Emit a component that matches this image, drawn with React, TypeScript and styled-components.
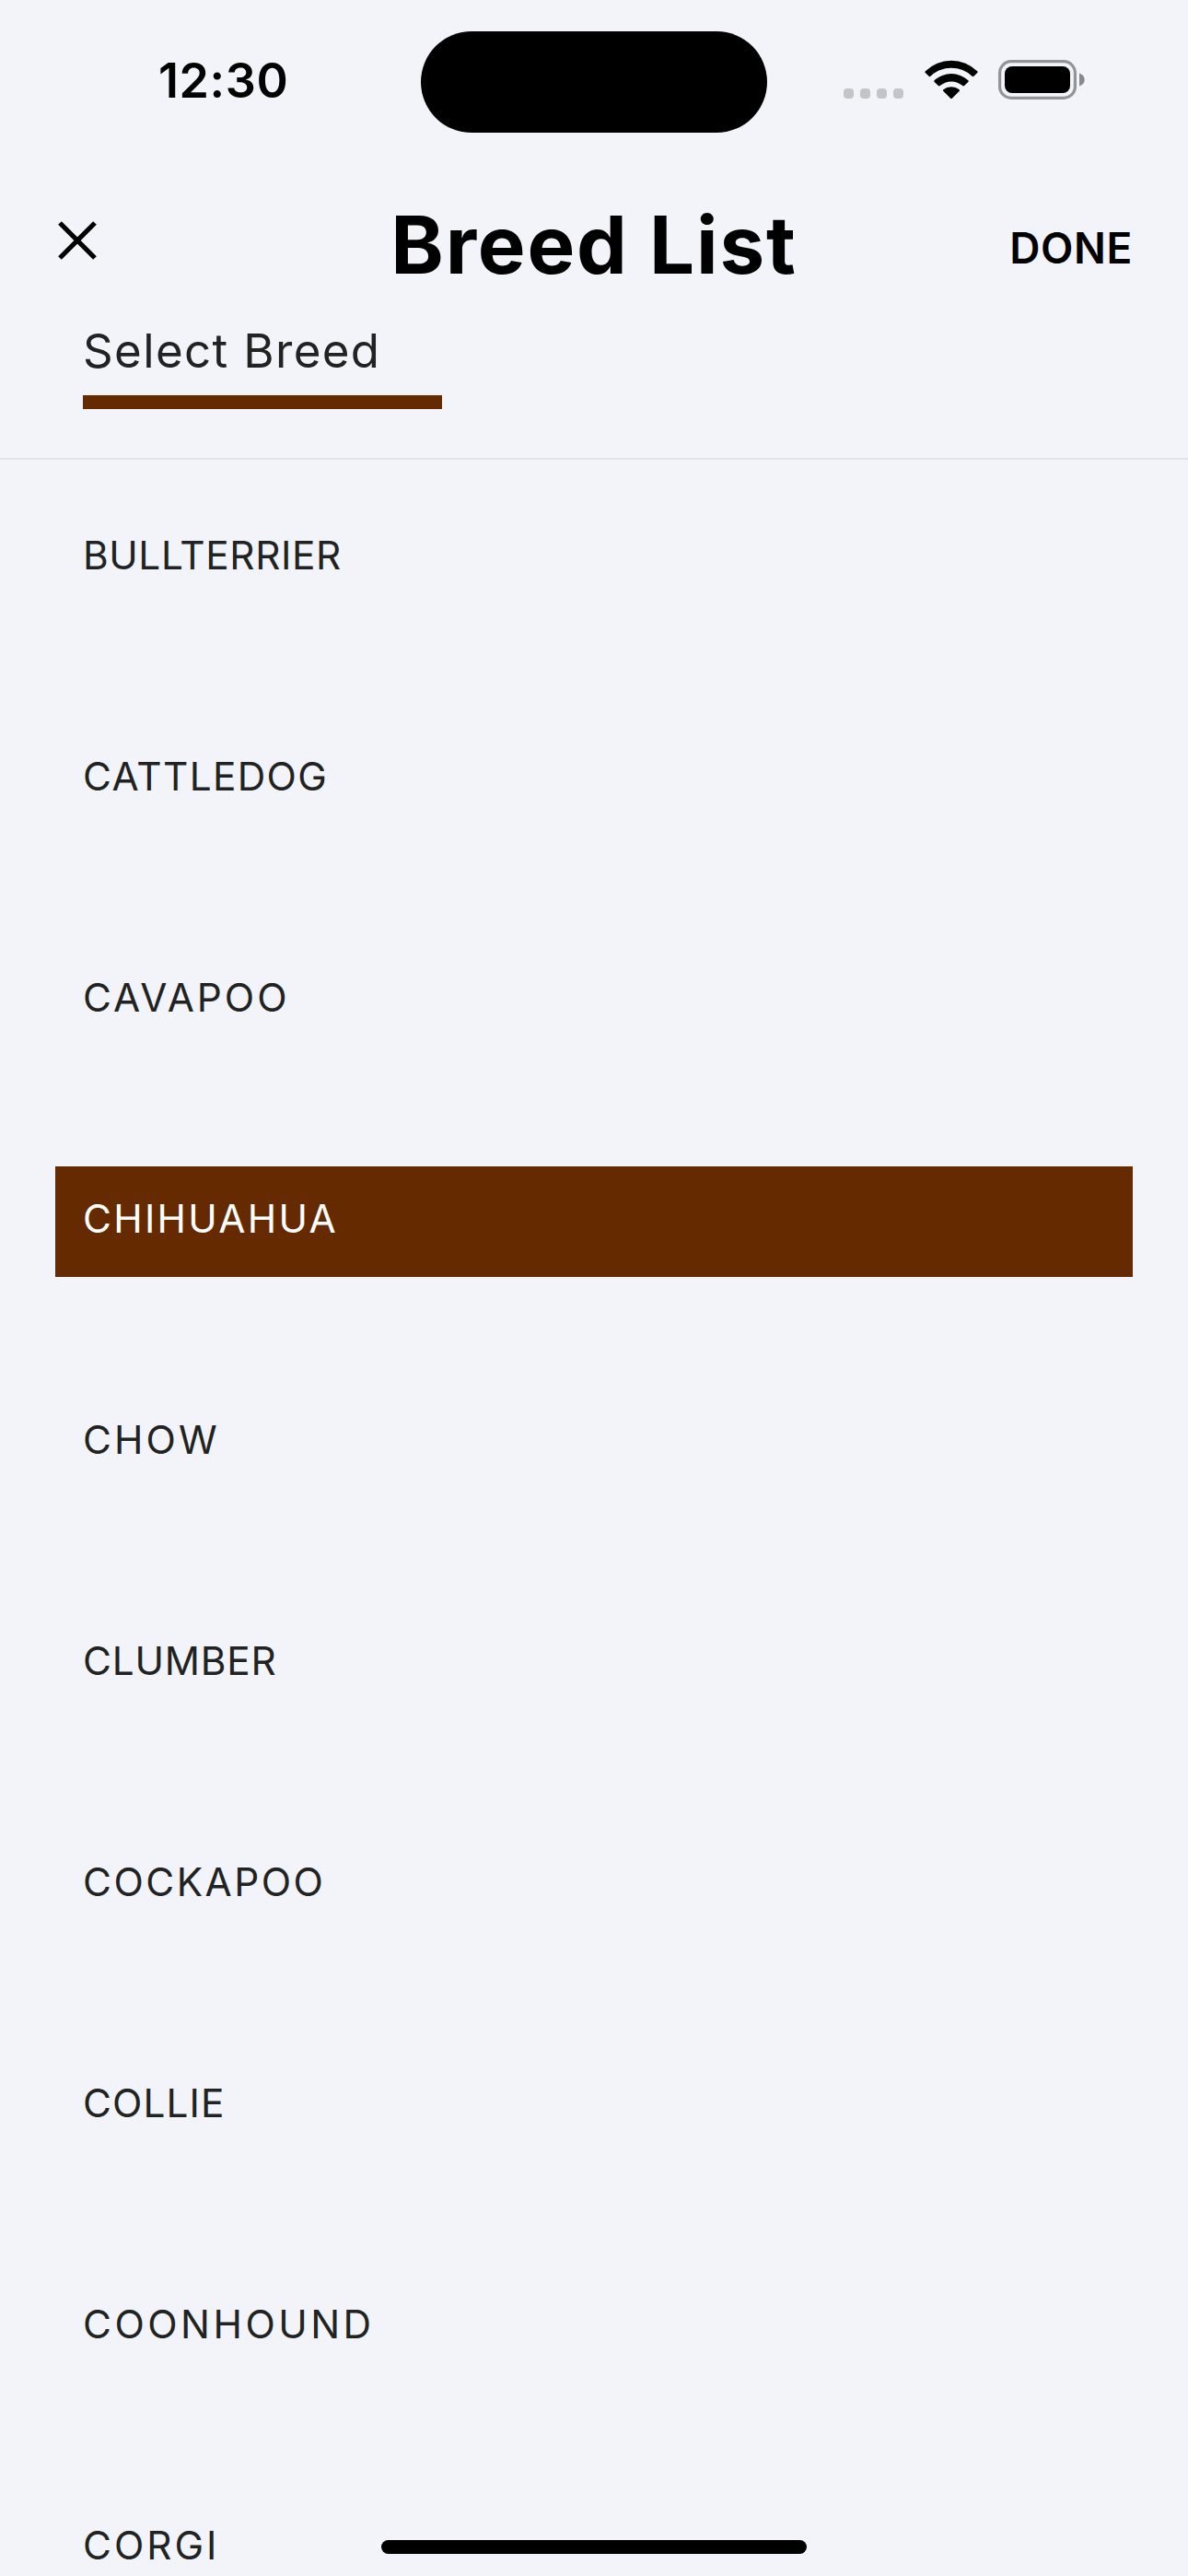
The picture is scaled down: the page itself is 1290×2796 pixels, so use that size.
import React, { useState } from "react";
import styled, { createGlobalStyle } from "styled-components";

const BROWN = "#662a00";
const PAPER = "#f3f4fa";
const INK = "#212322";

const GlobalStyle = createGlobalStyle`
  *, *::before, *::after { box-sizing: border-box; }
  html, body { margin: 0; padding: 0; background: ${PAPER}; }
  body { font-family: Inter, "Liberation Sans", sans-serif; }
`;

const Screen = styled.div`
  position: relative;
  display: flex;
  flex-direction: column;
  width: 1290px;
  height: 2796px;
  overflow: hidden;
  background: ${PAPER};
`;

const StatusBar = styled.div`
  display: grid;
  flex: none;
  grid-template-columns: 457px 376px 457px;
  align-items: start;
  height: 200px;
  padding-top: 34px;
`;

const Clock = styled.time`
  padding-left: 172px;
  font-size: 52px;
  font-weight: 600;
  line-height: 108px;
  letter-spacing: 0.6px;
  color: #000;
`;

const Island = styled.div`
  height: 110px;
  border-radius: 55px;
  background: #000;
`;

const StatusIcons = styled.div`
  display: flex;
  align-items: flex-start;
  padding: 31px 0 0 83px;
`;

const SignalDots = styled.div`
  display: flex;
  gap: 7px;
  padding-top: 31px;
  margin-right: 23px;
`;

const Dot = styled.span`
  width: 11px;
  height: 11px;
  border-radius: 4px;
  background: #c3c4c8;
`;

const WifiIcon = styled.svg`
  width: 58px;
  height: 43px;
  margin-right: 22px;
`;

const BatteryIcon = styled.svg`
  width: 95px;
  height: 43px;
`;

const Header = styled.header`
  display: flex;
  flex: none;
  flex-direction: column;
  height: 299px;
  border-bottom: 2px solid #e3e4e9;
`;

const TitleRow = styled.div`
  display: grid;
  flex: none;
  grid-template-columns: 1fr auto 1fr;
  height: 132px;
  padding: 0 60px;
`;

const CloseButton = styled.button`
  justify-self: start;
  width: 48px;
  height: 48px;
  margin-top: 37px;
  padding: 0;
  border: 0;
  background: none;
`;

const CloseIcon = styled.svg`
  display: block;
  width: 48px;
  height: 48px;
`;

const Title = styled.h1`
  margin: 0;
  font-size: 87px;
  font-weight: 700;
  line-height: 131px;
  letter-spacing: 1.8px;
  color: #000;
`;

const DoneButton = styled.button`
  justify-self: end;
  height: 139px;
  padding: 0;
  border: 0;
  background: none;
  font-family: inherit;
  font-size: 46px;
  font-weight: 600;
  line-height: 139px;
  letter-spacing: 0.6px;
  color: #000;
`;

const Section = styled.div`
  width: 390px;
  margin-left: 90px;
`;

const SectionLabel = styled.h2`
  margin: 0;
  height: 97px;
  font-size: 51px;
  font-weight: 400;
  line-height: 98px;
  letter-spacing: 1.36px;
  white-space: nowrap;
  color: ${INK};
`;

const Underline = styled.div`
  height: 15px;
  background: ${BROWN};
`;

const BreedList = styled.ul`
  display: flex;
  flex: none;
  flex-direction: column;
  gap: 120px;
  margin: 0;
  padding: 47px 60px 0;
  list-style: none;
`;

const BreedRow = styled.li<{ $selected: boolean; $tracking: number }>`
  flex: none;
  height: 120px;
  padding-left: 30px;
  font-size: 42.3px;
  line-height: 113px;
  letter-spacing: ${(p) => p.$tracking}px;
  background: ${(p) => (p.$selected ? BROWN : "transparent")};
  color: ${(p) => (p.$selected ? "#fff" : INK)};
`;

const HomeIndicator = styled.div`
  position: absolute;
  left: 414px;
  bottom: 24px;
  width: 462px;
  height: 15px;
  border-radius: 8px;
  background: #000;
`;

const breeds = [
  { name: "BULLTERRIER", tracking: 0.61 },
  { name: "CATTLEDOG", tracking: 1.35 },
  { name: "CAVAPOO", tracking: 3.0 },
  { name: "CHIHUAHUA", tracking: 2.3 },
  { name: "CHOW", tracking: 3.1 },
  { name: "CLUMBER", tracking: 0.8 },
  { name: "COCKAPOO", tracking: 2.5 },
  { name: "COLLIE", tracking: 1.1 },
  { name: "COONHOUND", tracking: 3.5 },
  { name: "CORGI", tracking: 3.0 },
];

export default function App() {
  const [selected, setSelected] = useState("CHIHUAHUA");

  return (
    <>
      <GlobalStyle />
      <Screen>
        <StatusBar>
          <Clock>12:30</Clock>
          <Island />
          <StatusIcons>
            <SignalDots>
              {[0, 1, 2, 3].map((dot) => (
                <Dot key={dot} />
              ))}
            </SignalDots>
            <WifiIcon viewBox="0 0 58 43">
              <path d="M0.8 12.3Q0 13.2 0.8 14L4.6 17.8Q5.5 18.6 6.4 17.7A33 33 0 0 1 51.6 17.7Q52.5 18.6 53.4 17.8L57.2 14Q58 13.2 57.2 12.3A40 40 0 0 0 0.8 12.3Z" />
              <path d="M10.6 22.2Q9.8 23.1 10.7 24L14.9 28.1Q15.8 28.9 16.7 28.1A18.5 18.5 0 0 1 41.3 28.1Q42.2 28.9 43.1 28.1L47.3 24Q48.2 23.1 47.4 22.2A27.3 27.3 0 0 0 10.6 22.2Z" />
              <path d="M20.3 32.3Q19.6 33.2 20.4 34L28.2 41.8Q29 42.5 29.8 41.8L37.6 34Q38.4 33.2 37.7 32.3A13.6 13.6 0 0 0 20.3 32.3Z" />
            </WifiIcon>
            <BatteryIcon viewBox="0 0 95 43">
              <rect x="1.6" y="1.6" width="81.8" height="39.8" rx="12.5" fill="none" stroke="#939498" strokeWidth="3.2" />
              <rect x="7" y="7" width="71" height="29" rx="8" />
              <path d="M88 14.5Q93.7 16.5 93.7 21.5T88 28.5Z" fill="#88898c" />
            </BatteryIcon>
          </StatusIcons>
        </StatusBar>

        <Header>
          <TitleRow>
            <CloseButton aria-label="Close">
              <CloseIcon viewBox="0 0 48 48">
                <path d="M5 5L43 43M43 5L5 43" fill="none" stroke="#000" strokeWidth="5.2" />
              </CloseIcon>
            </CloseButton>
            <Title>Breed List</Title>
            <DoneButton>DONE</DoneButton>
          </TitleRow>
          <Section>
            <SectionLabel>Select Breed</SectionLabel>
            <Underline />
          </Section>
        </Header>

        <BreedList>
          {breeds.map(({ name, tracking }) => (
            <BreedRow
              key={name}
              $selected={name === selected}
              $tracking={tracking}
              onClick={() => setSelected(name)}
            >
              {name}
            </BreedRow>
          ))}
        </BreedList>

        <HomeIndicator />
      </Screen>
    </>
  );
}
